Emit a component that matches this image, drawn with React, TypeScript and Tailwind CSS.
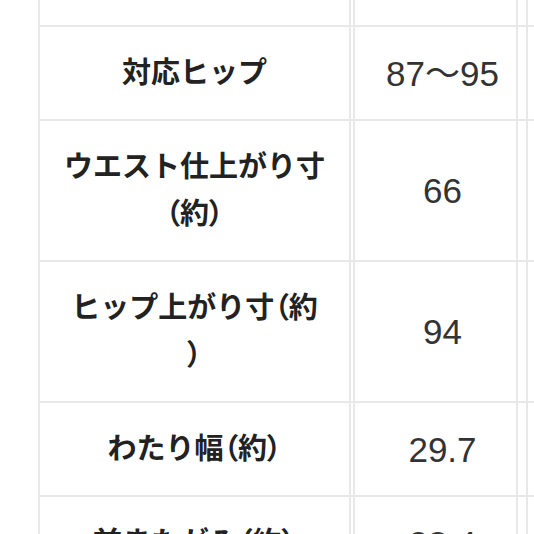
const rows: { label: string[]; value: string }[] = [
  { label: ["対応ヒップ"], value: "87〜95" },
  { label: ["ウエスト仕上がり寸", "（約）"], value: "66" },
  { label: ["ヒップ上がり寸（約", "）"], value: "94" },
  { label: ["わたり幅（約）"], value: "29.7" },
  { label: ["前またがみ（約）"], value: "23.4" },
]

function Label({ text }: { text: string }) {
  // fullwidth brackets are drawn narrow in the screenshot
  const parts = text.split(/([（）])/)
  return (
    <span className="whitespace-nowrap">
      {parts.map((p, i) =>
        p === "（" || p === "）" ? (
          <span key={i} className="[font-feature-settings:'palt']">
            {p}
          </span>
        ) : (
          <span key={i}>{p}</span>
        )
      )}
    </span>
  )
}

function Row({ children, height }: { children?: React.ReactNode[]; height: string }) {
  return (
    <div className={`flex border-b-2 border-[#e8e8e8] ${height}`}>
      <div className="flex w-[313px] shrink-0 flex-col items-center justify-center border-x-2 border-[#e8e8e8] text-[29px] font-bold leading-[47px] text-[#222]">
        {children?.[0]}
      </div>
      <div className="ml-[2px] flex w-[165px] shrink-0 items-center justify-center border-x-2 border-[#e8e8e8] pl-[14px] text-[35px] leading-[47px] text-[#333]">
        {children?.[1]}
      </div>
      <div className="ml-[8px] flex-1 border-l-2 border-[#e8e8e8]" />
    </div>
  )
}

export default function App() {
  return (
    <div
      className="h-[534px] w-[534px] overflow-hidden bg-white pl-[38px]"
      style={{ fontFamily: '"Liberation Sans", "Noto Sans CJK JP", sans-serif' }}
    >
      <Row height="h-[27px]" />
      {rows.map((r) => (
        <Row key={r.value} height={r.label.length > 1 ? "h-[141px]" : "h-[94px]"}>
          {[
            <>
              {r.label.map((l) => (
                <Label key={l} text={l} />
              ))}
            </>,
            <span className="whitespace-nowrap">{r.value}</span>,
          ]}
        </Row>
      ))}
    </div>
  )
}
